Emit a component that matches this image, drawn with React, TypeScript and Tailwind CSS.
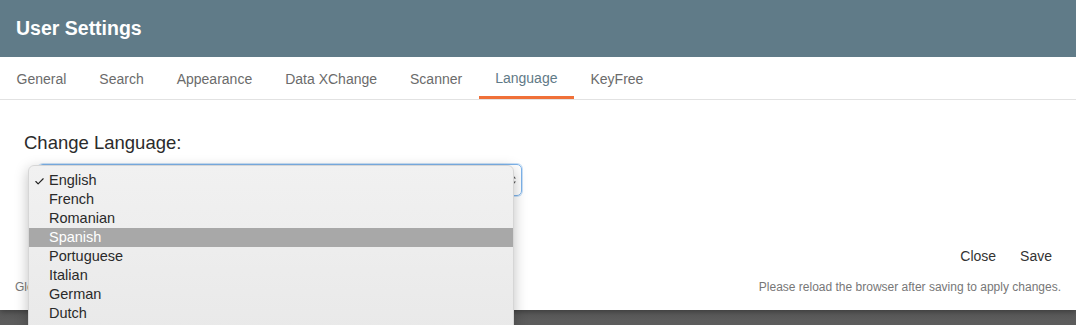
import { Check } from "lucide-react";

const tabs = ["General", "Search", "Appearance", "Data XChange", "Scanner", "Language", "KeyFree"];
const languages = ["English", "French", "Romanian", "Spanish", "Portuguese", "Italian", "German", "Dutch"];

export default function App() {
  return (
    <div className="h-[325px] w-[1076px] overflow-hidden bg-gradient-to-b from-[#4a4a4a] to-[#5c5c5c] font-['Liberation_Sans',Arial,sans-serif]">
      <div className="relative h-[310px] bg-white shadow-[0_2px_6px_rgba(0,0,0,0.35)]">
        {/* header */}
        <div className="flex h-[57px] items-center bg-[#607b88] px-4 pt-[1px]">
          <h1 className="text-[19.5px] font-bold text-white">User Settings</h1>
        </div>

        {/* tabs */}
        <div className="flex h-[43px] border-b border-[#e2e2e2]">
          {tabs.map((t) => (
            <div
              key={t}
              className={
                t === "Language"
                  ? "flex items-center border-b-[3px] border-[#f07038] px-[16.5px] pt-[4px] text-[14px] text-[#5f7a87]"
                  : "flex items-center px-[16.5px] pt-[3px] text-[14px] text-[#6b6b6b]"
              }
            >
              {t}
            </div>
          ))}
        </div>

        {/* body */}
        <div className="px-6 pt-8">
          <div className="h-[22px] text-[18.5px] leading-[22px] text-[#2b2b2b]">Change Language:</div>
          <div className="ml-[14px] mt-[10px] flex h-[32px] w-[484px] items-center justify-end rounded-[5px] border border-[#7db3ea] pr-[4px] shadow-[0_0_0_1px_rgba(125,179,234,0.4)]">
            <svg width="8" height="14" viewBox="0 0 8 14">
              <path d="M1 5.5 L4 2 L7 5.5 Z" fill="#555" />
              <path d="M1 8.5 L4 12 L7 8.5 Z" fill="#555" />
            </svg>
          </div>
        </div>

        {/* footer */}
        <div className="mt-[42px] flex h-[36px] items-center justify-end gap-[24px] pr-[24px] text-[14px] text-[#333]">
          <button className="cursor-pointer">Close</button>
          <button className="cursor-pointer">Save</button>
        </div>
        <div className="mt-[5px] flex h-[16px] items-center justify-between px-[15px] text-[12px] text-[#777]">
          <span>Global language is used for all users.</span>
          <span>Please reload the browser after saving to apply changes.</span>
        </div>

        {/* open select menu */}
        <div className="absolute left-[28px] top-[165px] h-[170px] w-[486px] rounded-[6px] border border-[#d6d6d6] bg-gradient-to-b from-[#f1f1f1] to-[#e9e9e9] py-[5px] shadow-[0_4px_14px_rgba(0,0,0,0.25)]">
          {languages.map((l) => (
            <div
              key={l}
              className={
                l === "Spanish"
                  ? "relative flex h-[19px] items-center bg-[#a8a8a8] pl-[20px] text-[14.5px] text-white"
                  : "relative flex h-[19px] items-center pl-[20px] text-[14.5px] text-[#2a2a2a]"
              }
            >
              {l === "English" && (
                <Check className="absolute left-[5px] top-[5px]" size={11} strokeWidth={2.5} color="#222" />
              )}
              {l}
            </div>
          ))}
        </div>
      </div>
    </div>
  );
}
